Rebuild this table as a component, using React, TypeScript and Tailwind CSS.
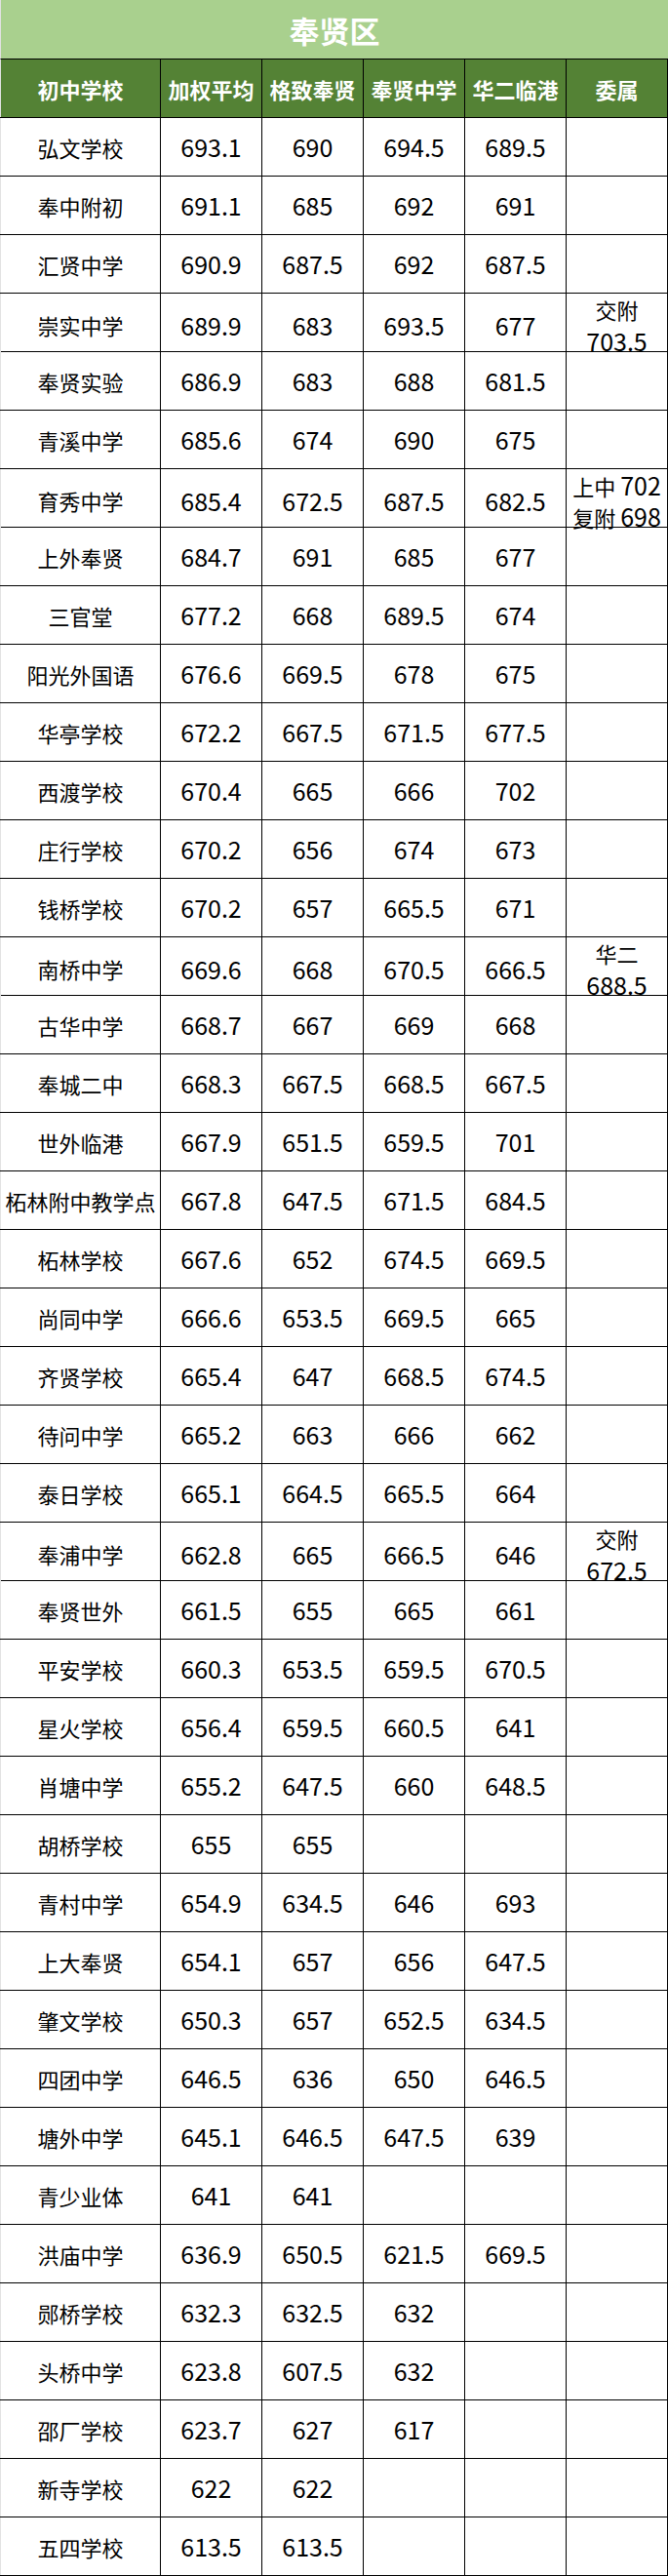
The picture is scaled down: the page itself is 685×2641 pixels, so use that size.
import React from "react";

type Row = [string, string, string, string, string, string[]];

const rows: Row[] = [
  ["弘文学校", "693.1", "690", "694.5", "689.5", []],
  ["奉中附初", "691.1", "685", "692", "691", []],
  ["汇贤中学", "690.9", "687.5", "692", "687.5", []],
  ["崇实中学", "689.9", "683", "693.5", "677", ["交附", "703.5"]],
  ["奉贤实验", "686.9", "683", "688", "681.5", []],
  ["青溪中学", "685.6", "674", "690", "675", []],
  ["育秀中学", "685.4", "672.5", "687.5", "682.5", ["上中 702", "复附 698"]],
  ["上外奉贤", "684.7", "691", "685", "677", []],
  ["三官堂", "677.2", "668", "689.5", "674", []],
  ["阳光外国语", "676.6", "669.5", "678", "675", []],
  ["华亭学校", "672.2", "667.5", "671.5", "677.5", []],
  ["西渡学校", "670.4", "665", "666", "702", []],
  ["庄行学校", "670.2", "656", "674", "673", []],
  ["钱桥学校", "670.2", "657", "665.5", "671", []],
  ["南桥中学", "669.6", "668", "670.5", "666.5", ["华二", "688.5"]],
  ["古华中学", "668.7", "667", "669", "668", []],
  ["奉城二中", "668.3", "667.5", "668.5", "667.5", []],
  ["世外临港", "667.9", "651.5", "659.5", "701", []],
  ["柘林附中教学点", "667.8", "647.5", "671.5", "684.5", []],
  ["柘林学校", "667.6", "652", "674.5", "669.5", []],
  ["尚同中学", "666.6", "653.5", "669.5", "665", []],
  ["齐贤学校", "665.4", "647", "668.5", "674.5", []],
  ["待问中学", "665.2", "663", "666", "662", []],
  ["泰日学校", "665.1", "664.5", "665.5", "664", []],
  ["奉浦中学", "662.8", "665", "666.5", "646", ["交附", "672.5"]],
  ["奉贤世外", "661.5", "655", "665", "661", []],
  ["平安学校", "660.3", "653.5", "659.5", "670.5", []],
  ["星火学校", "656.4", "659.5", "660.5", "641", []],
  ["肖塘中学", "655.2", "647.5", "660", "648.5", []],
  ["胡桥学校", "655", "655", "", "", []],
  ["青村中学", "654.9", "634.5", "646", "693", []],
  ["上大奉贤", "654.1", "657", "656", "647.5", []],
  ["肇文学校", "650.3", "657", "652.5", "634.5", []],
  ["四团中学", "646.5", "636", "650", "646.5", []],
  ["塘外中学", "645.1", "646.5", "647.5", "639", []],
  ["青少业体", "641", "641", "", "", []],
  ["洪庙中学", "636.9", "650.5", "621.5", "669.5", []],
  ["郧桥学校", "632.3", "632.5", "632", "", []],
  ["头桥中学", "623.8", "607.5", "632", "", []],
  ["邵厂学校", "623.7", "627", "617", "", []],
  ["新寺学校", "622", "622", "", "", []],
  ["五四学校", "613.5", "613.5", "", "", []],
];

const headers = ["初中学校", "加权平均", "格致奉贤", "奉贤中学", "华二临港", "委属"];

function Mixed({ text }: { text: string }) {
  const parts = text.split(/(\d[\d.]*)/).filter((p) => p !== "");
  return (
    <span className="whitespace-pre">
      {parts.map((p, i) =>
        /\d/.test(p) ? (
          <span key={i} className="text-[25px]">
            {p}
          </span>
        ) : (
          <span key={i} className="text-[22px]">
            {p}
          </span>
        )
      )}
    </span>
  );
}

const font = "font-['Noto_Sans_CJK_SC','Noto_Sans',sans-serif]";

export default function App() {
  return (
    <div className={`w-[685px] bg-white ${font}`}>
      <div className="h-[61px] bg-[#a9d08e] border-b border-black border-l border-l-[#e2e2e2] flex items-center justify-center">
        <span className="text-white font-bold text-[31px] leading-none">奉贤区</span>
      </div>
      <div className="grid grid-cols-[165px_104px_104px_104px_104px_104px] h-[60px] bg-[#548235] border-b border-black">
        {headers.map((h, i) => (
          <div
            key={h}
            className={`flex items-center justify-center border-r border-black text-white font-bold text-[22px] leading-none ${
              i === 0 ? "border-l border-l-[#e2e2e2]" : ""
            }`}
          >
            {h}
          </div>
        ))}
      </div>
      {rows.map((r) => (
        <div
          key={r[0]}
          className="grid grid-cols-[165px_104px_104px_104px_104px_104px] h-[60px] border-b border-black text-black"
        >
          <div className="flex items-center justify-center border-r border-black border-l border-l-[#e2e2e2] text-[22px] leading-none whitespace-nowrap">
            {r[0]}
          </div>
          {[r[1], r[2], r[3], r[4]].map((v, i) => (
            <div key={i} className="flex items-center justify-center border-r border-black text-[25px] leading-none">
              {v}
            </div>
          ))}
          <div className="flex flex-col items-center justify-center border-r border-black whitespace-nowrap">
            {r[5].map((line, i) => (
              <div key={i} className="h-[32px] leading-[32px] text-center">
                <Mixed text={line} />
              </div>
            ))}
          </div>
        </div>
      ))}
    </div>
  );
}
